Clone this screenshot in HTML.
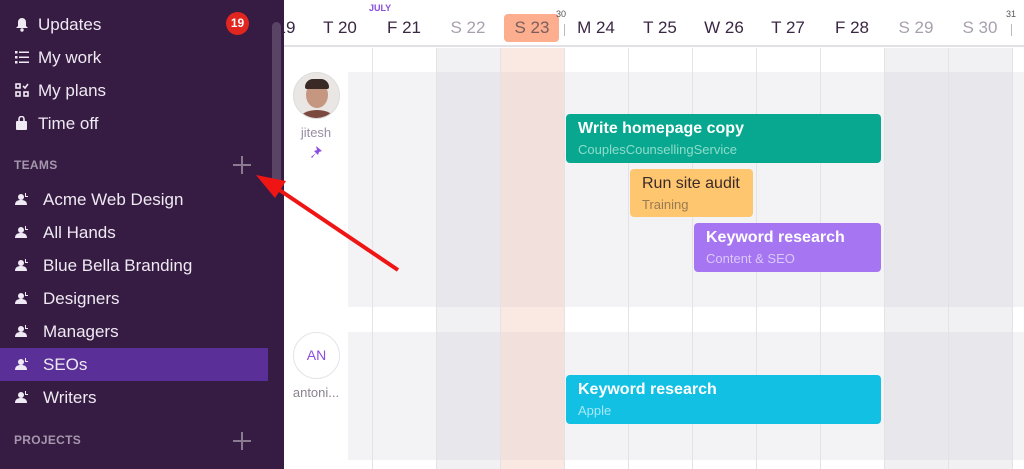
<!DOCTYPE html>
<html><head><style>
*{margin:0;padding:0;box-sizing:border-box}
body{width:1024px;height:469px;overflow:hidden;font-family:"Liberation Sans",sans-serif;background:#fff;position:relative}
.sb{position:absolute;left:0;top:0;width:284px;height:469px;background:#361c42}
.it{position:absolute;left:0;height:33px;width:268px;color:#efe9f3;font-size:17px;line-height:33px}
.it svg{position:absolute;left:15px;top:9px}
.it span.t{position:absolute;left:38px}
.team span.t{left:43px}
.hd{position:absolute;left:14px;font-size:12px;font-weight:bold;color:#a597ad;letter-spacing:.3px}
.plus{position:absolute;left:233px;width:18px;height:18px}
.plus:before,.plus:after{content:"";position:absolute;background:#8a7a92}
.plus:before{left:8px;top:0;width:2px;height:18px}
.plus:after{left:0;top:8px;width:18px;height:2px}
.col{position:absolute;top:48px;height:421px;width:1px;background:#e4e2e6}
.day{position:absolute;top:18px;font-size:17px;color:#3a2743;width:64px;text-align:center}
.wk{color:#a89fae}
.ev{position:absolute;border-radius:4px;padding:6px 12px;overflow:hidden;white-space:nowrap}
.ev b{display:block;font-size:16px;font-weight:bold}
.ev i{display:block;font-style:normal;font-size:13px;margin-top:4px}
</style></head><body>
<div style="position:absolute;left:284px;top:0;width:740px;height:47px;border-bottom:2px solid #e3dfe6"></div>
<div style="position:absolute;left:348px;top:72px;width:676px;height:235px;background:#f3f3f6"></div>
<div style="position:absolute;left:348px;top:332px;width:676px;height:128px;background:#f3f3f6"></div>
<div style="position:absolute;left:436px;top:48px;width:64px;height:421px;background:rgba(200,196,208,.25)"></div>
<div style="position:absolute;left:500px;top:48px;width:64px;height:421px;background:rgba(240,190,175,.35)"></div>
<div style="position:absolute;left:884px;top:48px;width:128px;height:421px;background:rgba(200,196,208,.25)"></div>
<div class="col" style="left:372px"></div><div class="col" style="left:436px"></div><div class="col" style="left:500px"></div><div class="col" style="left:564px"></div><div class="col" style="left:628px"></div><div class="col" style="left:692px"></div><div class="col" style="left:756px"></div><div class="col" style="left:820px"></div><div class="col" style="left:884px"></div><div class="col" style="left:948px"></div><div class="col" style="left:1012px"></div>
<div style="position:absolute;left:369px;top:3px;font-size:9px;font-weight:bold;color:#8a4ee0">JULY</div>
<div class="day" style="left:254px">19</div>
<div class="day" style="left:308px">T 20</div><div class="day" style="left:372px">F 21</div>
<div class="day wk" style="left:436px">S 22</div>
<div style="position:absolute;left:504px;top:14px;width:55px;height:28px;border-radius:4px;background:#fcae8f"></div>
<div class="day" style="left:500px;color:#7a5d5d">S 23</div>
<div style="position:absolute;left:556px;top:9px;font-size:9px;color:#555">30</div>
<div style="position:absolute;left:564px;top:24px;width:1px;height:12px;background:#bbb"></div>
<div class="day" style="left:564px">M 24</div><div class="day" style="left:628px">T 25</div><div class="day" style="left:692px">W 26</div><div class="day" style="left:756px">T 27</div><div class="day" style="left:820px">F 28</div>
<div class="day wk" style="left:884px">S 29</div><div class="day wk" style="left:948px">S 30</div>
<div style="position:absolute;left:1006px;top:9px;font-size:9px;color:#555">31</div>
<div style="position:absolute;left:1011px;top:24px;width:1px;height:12px;background:#bbb"></div>
<div style="position:absolute;left:293px;top:72px;width:47px;height:47px;border-radius:50%;overflow:hidden;border:1px solid #ddd;background:#e9e6e4">
<div style="position:absolute;left:12px;top:9px;width:22px;height:26px;border-radius:50%;background:#c59680"></div>
<div style="position:absolute;left:11px;top:6px;width:24px;height:10px;border-radius:12px 12px 3px 3px;background:#3a2a25"></div>
<div style="position:absolute;left:5px;top:37px;width:36px;height:20px;border-radius:50%;background:#7a4a40"></div></div>
<div style="position:absolute;left:284px;top:125px;width:64px;text-align:center;font-size:13px;color:#9a8ea3">jitesh</div>
<svg style="position:absolute;left:310px;top:146px" width="12" height="12" viewBox="0 0 12 12"><path d="M6 0l6 5-3 1-1 3-2-2-4 5-1-1 5-4-2-2 3-1z" fill="#8a4ee0"/></svg>
<div style="position:absolute;left:293px;top:332px;width:47px;height:47px;border-radius:50%;border:1px solid #e6e3e8;background:#fff;text-align:center;line-height:45px;font-size:14px;color:#8a4ee0">AN</div>
<div style="position:absolute;left:284px;top:385px;width:64px;text-align:center;font-size:13px;color:#8b8290">antoni...</div>
<div class="ev" style="left:566px;top:114px;width:315px;height:49px;background:#07a88f;color:#fff"><b>Write homepage copy</b><i style="color:#8fdccc">CouplesCounsellingService</i></div>
<div class="ev" style="left:630px;top:169px;width:123px;height:48px;background:#fec66e;color:#3b2a2a"><b style="font-weight:normal">Run site audit</b><i style="color:#9a7a52">Training</i></div>
<div class="ev" style="left:694px;top:223px;width:187px;height:49px;background:#a676f2;color:#fff"><b>Keyword research</b><i style="color:#dcc8fb">Content &amp; SEO</i></div>
<div class="ev" style="left:566px;top:375px;width:315px;height:49px;background:#11c0e3;color:#fff"><b>Keyword research</b><i style="color:#a6e8f6">Apple</i></div>
<div class="sb">
<div style="position:absolute;left:272px;top:22px;width:9px;height:165px;border-radius:5px;background:#5a4466"></div>
<div class="it" style="top:8px"><svg width="14" height="15" viewBox="0 0 14 15"><path d="M7 1a4 4 0 0 1 4 4v4l2 2H1l2-2V5a4 4 0 0 1 4-4z" fill="#efe9f3"/><circle cx="7" cy="13" r="1.7" fill="#efe9f3"/></svg><span class="t">Updates</span></div>
<div style="position:absolute;left:226px;top:12px;width:23px;height:23px;border-radius:50%;background:#e0261f;color:#fff;font-size:12px;font-weight:bold;text-align:center;line-height:23px">19</div>
<div class="it" style="top:41px"><svg width="14" height="14" viewBox="0 0 14 14" fill="#efe9f3"><rect x="0" y="1" width="2.5" height="2.5"/><rect x="0" y="6" width="2.5" height="2.5"/><rect x="0" y="11" width="2.5" height="2.5"/><rect x="4" y="1.5" width="10" height="1.5"/><rect x="4" y="6.5" width="10" height="1.5"/><rect x="4" y="11.5" width="10" height="1.5"/></svg><span class="t">My work</span></div>
<div class="it" style="top:74px"><svg width="14" height="14" viewBox="0 0 14 14" fill="none" stroke="#efe9f3" stroke-width="1.6"><rect x="1" y="1" width="4" height="4"/><rect x="1" y="9" width="4" height="4"/><rect x="9" y="9" width="4" height="4"/><path d="M8 3l2 2 3-4"/></svg><span class="t">My plans</span></div>
<div class="it" style="top:107px"><svg width="13" height="15" viewBox="0 0 13 15"><path d="M4 5V3a2.5 2.5 0 0 1 5 0v2" stroke="#efe9f3" stroke-width="1.6" fill="none"/><rect x="1" y="5" width="11" height="9" rx="1" fill="#efe9f3"/></svg><span class="t">Time off</span></div>
<div class="hd" style="top:158px">TEAMS</div><div class="plus" style="top:156px"></div>
<div class="it team" style="top:183px"><svg width="16" height="14" viewBox="0 0 16 14" fill="#efe9f3"><circle cx="6" cy="5" r="3"/><path d="M0 13c0-4 3-5 6-5s6 1 6 5z"/><path d="M10 1h1v3h2v1h-3z"/></svg><span class="t">Acme Web Design</span></div>
<div class="it team" style="top:216px"><svg width="16" height="14" viewBox="0 0 16 14" fill="#efe9f3"><circle cx="6" cy="5" r="3"/><path d="M0 13c0-4 3-5 6-5s6 1 6 5z"/><path d="M10 1h1v3h2v1h-3z"/></svg><span class="t">All Hands</span></div>
<div class="it team" style="top:249px"><svg width="16" height="14" viewBox="0 0 16 14" fill="#efe9f3"><circle cx="6" cy="5" r="3"/><path d="M0 13c0-4 3-5 6-5s6 1 6 5z"/><path d="M10 1h1v3h2v1h-3z"/></svg><span class="t">Blue Bella Branding</span></div>
<div class="it team" style="top:282px"><svg width="16" height="14" viewBox="0 0 16 14" fill="#efe9f3"><circle cx="6" cy="5" r="3"/><path d="M0 13c0-4 3-5 6-5s6 1 6 5z"/><path d="M10 1h1v3h2v1h-3z"/></svg><span class="t">Designers</span></div>
<div class="it team" style="top:315px"><svg width="16" height="14" viewBox="0 0 16 14" fill="#efe9f3"><circle cx="6" cy="5" r="3"/><path d="M0 13c0-4 3-5 6-5s6 1 6 5z"/><path d="M10 1h1v3h2v1h-3z"/></svg><span class="t">Managers</span></div>
<div class="it team" style="top:348px;background:#5b2f98"><svg width="16" height="14" viewBox="0 0 16 14" fill="#efe9f3"><circle cx="6" cy="5" r="3"/><path d="M0 13c0-4 3-5 6-5s6 1 6 5z"/><path d="M10 1h1v3h2v1h-3z"/></svg><span class="t">SEOs</span></div>
<div class="it team" style="top:381px"><svg width="16" height="14" viewBox="0 0 16 14" fill="#efe9f3"><circle cx="6" cy="5" r="3"/><path d="M0 13c0-4 3-5 6-5s6 1 6 5z"/><path d="M10 1h1v3h2v1h-3z"/></svg><span class="t">Writers</span></div>
<div class="hd" style="top:433px">PROJECTS</div><div class="plus" style="top:432px"></div>
</div>
<svg style="position:absolute;left:0;top:0" width="1024" height="469"><line x1="398" y1="270" x2="275" y2="187" stroke="#f01515" stroke-width="4"/><polygon points="256,175 286,181 275,198" fill="#f01515"/></svg>
</body></html>
